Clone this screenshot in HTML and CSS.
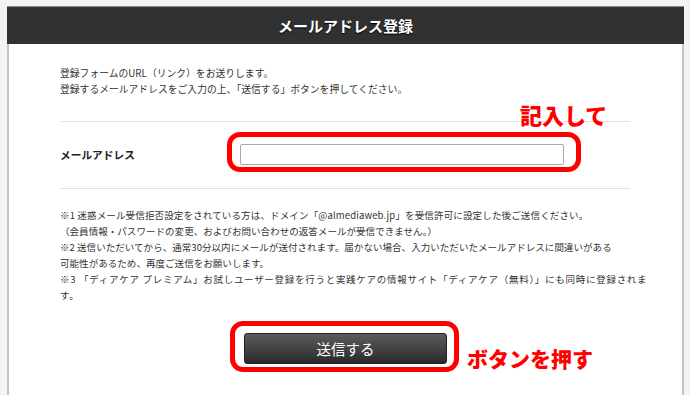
FILE: index.html
```html
<!DOCTYPE html>
<html lang="ja">
<head>
<meta charset="utf-8">
<title>メールアドレス登録</title>
<link rel="stylesheet" href="styles.css">
</head>
<body>
<div class="panel">
  <div class="header">メールアドレス登録</div>
  <div class="body">
    <p class="intro">登録フォームのURL（リンク）をお送りします。<br>登録するメールアドレスをご入力の上、「送信する」ボタンを押してください。</p>
    <div class="form-row">
      <label class="label">メールアドレス</label>
      <input class="input" type="text">
    </div>
    <p class="notes"><span class="l1">※1 迷惑メール受信拒否設定をされている方は、ドメイン「@almediaweb.jp」を受信許可に設定した後ご送信ください。</span><br>（会員情報・パスワードの変更、およびお問い合わせの返答メールが受信できません。）<br>※2 送信いただいてから、通常30分以内にメールが送付されます。届かない場合、入力いただいたメールアドレスに間違いがある<br>可能性があるため、再度ご送信をお願いします。<br><span class="l3">※3 「ディアケア プレミアム」お試しユーザー登録を行うと実践ケアの情報サイト「ディアケア（無料）」にも同時に登録されま<br>す。</span></p>
    <div class="actions">
      <button class="submit" type="button">送信する</button>
    </div>
    <div class="mark mark-input"></div>
    <div class="mark mark-button"></div>
    <div class="note-label note-input">記入して</div>
    <div class="note-label note-button">ボタンを押す</div>
  </div>
</div>
</body>
</html>
```
FILE: styles.css
```css
html, body {
  margin: 0;
  padding: 0;
}
body {
  background: #f3f3f3;
  font-family: "Noto Sans CJK JP", "Noto Sans", sans-serif;
  color: #333;
  padding-left: 7px;
  padding-top: 6px;
}
.panel {
  width: 677px;
}
.header {
  height: 37px;
  border-top: 1px solid #8a8a8a;
  background: #313131;
  color: #fff;
  font-size: 15px;
  font-weight: 700;
  line-height: 37px;
  text-align: center;
  text-shadow: 0 1px 1px #000;
}
.body {
  position: relative;
  background: #fff;
  border-left: 2px solid #c4c4c4;
  border-right: 2px solid #c4c4c4;
  padding: 21px 52px 40px 51px;
  height: 290px;
}
.intro {
  margin: 0;
  font-size: 9.8px;
  line-height: 16px;
}
.form-row {
  margin-top: 24px;
  border-top: 1px solid #e2e2e2;
  border-bottom: 1px solid #e2e2e2;
  padding: 22px 0 23px;
  display: flex;
  align-items: center;
}
.label {
  width: 180px;
  font-size: 10.7px;
  font-weight: 700;
  color: #222;
}
.input {
  box-sizing: border-box;
  width: 324px;
  height: 21px;
  margin: 0;
  border: 1px solid #a9a9a9;
  border-radius: 2px;
  background: #fff;
}
.notes {
  margin: 18px -40px 0 0;
  font-size: 9.5px;
  line-height: 16px;
  white-space: nowrap;
  letter-spacing: 0.05px;
}
.notes .l1 {
  letter-spacing: 0.15px;
}
.notes .l3 {
  letter-spacing: 0.72px;
}
.actions {
  display: flex;
  justify-content: center;
  margin-top: 30px;
  padding-left: 1px;
}
.submit {
  width: 203px;
  height: 31px;
  border: 1px solid #222;
  border-radius: 3px;
  background: linear-gradient(#5c5c5c, #2a2a2a);
  color: #fff;
  font-family: "Noto Sans CJK JP", sans-serif;
  font-size: 14.5px;
  padding: 0;
}
.mark {
  position: absolute;
  box-sizing: border-box;
  border: 5px solid #ff0000;
  border-radius: 13px;
}
.mark-input {
  left: 218px;
  top: 88px;
  width: 354px;
  height: 40px;
}
.mark-button {
  left: 221px;
  top: 277px;
  width: 229px;
  height: 51px;
}
.note-label {
  position: absolute;
  color: #ff0000;
  font-weight: 900;
  line-height: 1;
  white-space: nowrap;
}
.note-input {
  left: 511px;
  top: 59px;
  font-size: 22px;
}
.note-button {
  left: 458px;
  top: 304px;
  font-size: 21px;
}
```
